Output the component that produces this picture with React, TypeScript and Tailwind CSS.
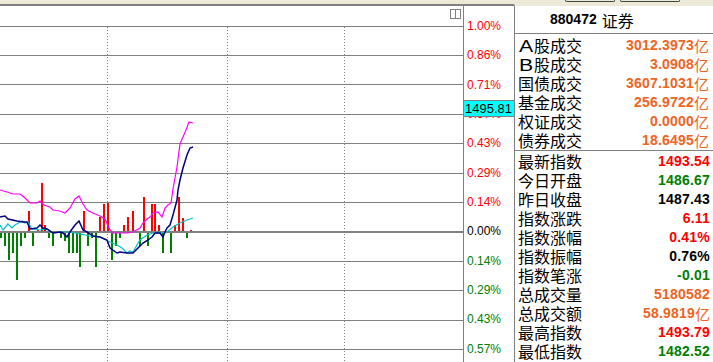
const GRID_Y = [26, 55, 84, 114, 143, 173, 202, 261, 290, 320, 349];
const V_X = [107, 227, 344];

const MAGENTA: [number, number][] = [
  [0, 190], [7, 192], [13, 194], [20, 194], [24, 197], [30, 203], [37, 203], [40, 201], [44, 205],
  [50, 207], [53, 210], [60, 211], [65, 213], [70, 208], [75, 199], [79, 196], [83, 204], [87, 210],
  [93, 213], [100, 216], [105, 219], [110, 230], [113, 233], [127, 233], [133, 232], [140, 228],
  [143, 223], [147, 219], [150, 217], [153, 213], [158, 212], [162, 217], [165, 208], [168, 205],
  [171, 203], [173, 189], [177, 167], [180, 144], [183, 137], [186, 130], [189, 122], [193, 123],
];

const NAVY: [number, number][] = [
  [0, 217], [5, 216], [8, 219], [17, 221], [23, 222], [27, 222], [30, 229], [37, 228], [40, 225],
  [43, 228], [47, 229], [53, 233], [60, 232], [63, 233], [67, 237], [70, 232], [75, 225], [79, 221],
  [83, 230], [87, 232], [93, 236], [100, 237], [107, 240], [110, 248], [117, 253], [120, 252],
  [127, 253], [133, 253], [138, 248], [143, 243], [148, 240], [152, 237], [155, 233], [160, 233],
  [163, 237], [165, 232], [167, 228], [170, 225], [173, 215], [177, 200], [178, 190], [180, 180],
  [183, 168], [187, 155], [190, 148], [193, 147],
];

const CYAN: [number, number][] = [
  [0, 225], [3, 230], [8, 224], [12, 228], [15, 225], [20, 222], [22, 221], [25, 223], [28, 222],
  [32, 229], [40, 230], [47, 229], [53, 233], [60, 232], [70, 232], [80, 234], [90, 236], [100, 237],
  [110, 242], [117, 245], [122, 248], [127, 253], [130, 251], [133, 252], [137, 245], [140, 240],
  [147, 235], [153, 233], [160, 233], [167, 232], [173, 227], [180, 223], [187, 220], [193, 218],
];

// [x, top] for up bars, [x, bottom] for down bars
const RED_BARS = [
  [28, 211], [37, 230], [41, 183], [44, 225], [83, 211], [99, 217], [103, 204], [107, 203],
  [123, 225], [127, 217], [132, 211], [143, 197], [151, 204], [154, 204], [158, 225], [174, 225],
  [178, 197], [182, 218], [190, 230],
];
const GREEN_BARS = [
  [0, 238], [4, 246], [8, 260], [12, 253], [16, 280], [20, 246], [24, 238], [32, 246], [48, 238],
  [52, 246], [60, 238], [64, 241], [68, 253], [72, 253], [76, 253], [79, 267], [87, 246], [91, 238],
  [95, 267], [111, 260], [115, 246], [119, 238], [139, 246], [147, 246], [162, 253], [170, 253],
  [186, 238],
];

const pts = (p: [number, number][]) => p.map((q) => q.join(',')).join(' ');

const COLOR = {
  r: 'text-[#ff0000]',
  g: 'text-[#008000]',
  k: 'text-black',
  o: 'text-[#f0641e]',
};
type C = keyof typeof COLOR;

const AXIS: [string, C][] = [
  ['1.00%', 'r'], ['0.86%', 'r'], ['0.71%', 'r'], ['0.57%', 'r'], ['0.43%', 'r'], ['0.29%', 'r'],
  ['0.14%', 'r'], ['0.00%', 'k'], ['0.14%', 'g'], ['0.29%', 'g'], ['0.43%', 'g'], ['0.57%', 'g'],
];

const TRADES: [string, string][] = [
  ['A股成交', '3012.3973'],
  ['B股成交', '3.0908'],
  ['国债成交', '3607.1031'],
  ['基金成交', '256.9722'],
  ['权证成交', '0.0000'],
  ['债券成交', '18.6495'],
];

const STATS: [string, string, C, boolean?][] = [
  ['最新指数', '1493.54', 'r'],
  ['今日开盘', '1486.67', 'g'],
  ['昨日收盘', '1487.43', 'k'],
  ['指数涨跌', '6.11', 'r'],
  ['指数涨幅', '0.41%', 'r'],
  ['指数振幅', '0.76%', 'k'],
  ['指数笔涨', '-0.01', 'g'],
  ['总成交量', '5180582', 'o'],
  ['总成交额', '58.9819', 'o', true],
  ['最高指数', '1493.79', 'r'],
  ['最低指数', '1482.52', 'g'],
];

function Label({ text }: { text: string }) {
  const latin = /^[AB]/.test(text);
  return (
    <span className="font-['Noto_Sans_CJK_SC',sans-serif] text-[16px] leading-[19px] text-black">
      {latin ? (
        <>
          <span className="inline-block w-[16px] text-center font-['Liberation_Sans',sans-serif] text-[17px] scale-x-125">
            {text[0]}
          </span>
          {text.slice(1)}
        </>
      ) : (
        text
      )}
    </span>
  );
}

function Value({ value, color, yi }: { value: string; color: C; yi?: boolean }) {
  return (
    <span className={`flex items-center ${COLOR[color]}`}>
      <span className="font-['Liberation_Sans',sans-serif] font-bold text-[14px] tracking-[0.2px] leading-[19px]">
        {value}
      </span>
      {yi && <span className="font-['Noto_Sans_CJK_SC',sans-serif] text-[15px] leading-[19px]">亿</span>}
    </span>
  );
}

function Chart() {
  return (
    <div className="relative w-[464px] border-r border-[#808080]">
      <svg width={463} height={356} viewBox="0 6 463 356" className="block">
        <g shapeRendering="crispEdges">
          {GRID_Y.map((y) => (
            <line key={y} x1={0} x2={463} y1={y + 0.5} y2={y + 0.5} stroke="#808080" strokeWidth={1} />
          ))}
          <rect x={0} y={231} width={463} height={2} fill="#808080" />
          {V_X.map((x) => (
            <line key={x} x1={x + 0.5} x2={x + 0.5} y1={27} y2={362} stroke="#808080" strokeWidth={1} strokeDasharray="1 2" />
          ))}
          {RED_BARS.map(([x, t]) => (
            <rect key={`r${x}`} x={x} y={t} width={2} height={231 - t} fill="#ff0000" />
          ))}
          {GREEN_BARS.map(([x, b]) => (
            <rect key={`g${x}`} x={x} y={233} width={2} height={b - 233} fill="#008000" />
          ))}
        </g>
        <polyline points={pts(MAGENTA)} fill="none" stroke="#ff00ff" strokeWidth={1.2} />
        <polyline points={pts(CYAN)} fill="none" stroke="#00c0c0" strokeWidth={1.2} />
        <polyline points={pts(NAVY)} fill="none" stroke="#000080" strokeWidth={1.5} />
      </svg>
      {/* split-window toggle */}
      <svg width={11} height={10} viewBox="0 0 11 10" className="absolute top-[3px] right-[2px]">
        <rect x={0.5} y={0.5} width={10} height={9} fill="white" stroke="#808080" />
        <line x1={5.5} x2={5.5} y1={0.5} y2={9.5} stroke="#808080" />
      </svg>
    </div>
  );
}

function Axis() {
  return (
    <div className="relative w-[50px] flex flex-col pt-[5.33px]">
      {AXIS.map(([t, c], i) => (
        <div
          key={i}
          className={`h-[29.33px] shrink-0 flex items-center pl-[3px] font-['Liberation_Sans',sans-serif] text-[12px] leading-none ${COLOR[c]}`}
        >
          {t}
        </div>
      ))}
      <div className="absolute top-[94px] left-0 w-[50px] h-[17px] bg-[#00ffff] border-y border-[#808080] flex items-center pl-[1px] font-['Liberation_Sans',sans-serif] text-[13px] leading-none text-black">
        1495.81
      </div>
    </div>
  );
}

function Panel() {
  return (
    <div className="flex-1 flex flex-col border-l border-[#808080] border-t-2 border-t-[#ece9d8]">
      <div className="h-[28px] shrink-0 flex items-center pl-[35px] border-b border-[#808080]">
        <span className="font-['Liberation_Sans',sans-serif] font-bold text-[14px] text-black">880472</span>
        <span className="ml-[5px] font-['Noto_Sans_CJK_SC',sans-serif] text-[16px] text-black">证券</span>
      </div>
      <div className="pt-[2px] border-b border-[#808080]">
        {TRADES.map(([l, v]) => (
          <div key={l} className="h-[19px] flex items-center justify-between pl-[3px] pr-[4px]">
            <Label text={l} />
            <Value value={v} color="o" yi />
          </div>
        ))}
      </div>
      <div className="pt-[1px]">
        {STATS.map(([l, v, c, yi]) => (
          <div key={l} className="h-[19px] flex items-center justify-between pl-[3px] pr-[3px]">
            <Label text={l} />
            <Value value={v} color={c} yi={yi} />
          </div>
        ))}
      </div>
    </div>
  );
}

export default function App() {
  return (
    <div className="w-[713px] h-[362px] bg-white overflow-hidden flex flex-col">
      <div className="h-[4px] shrink-0 bg-[#ece9d8] flex">
        <div className="w-[565px]" />
        <div className="w-[50px] h-[2px] border-x border-b border-[#3c4a3c] rounded-b-[2px]" />
        <div className="w-[5px]" />
        <div className="w-[60px] h-[2px] border-x border-b border-[#3c4a3c] rounded-b-[2px]" />
      </div>
      <div className="flex flex-1 min-h-0">
        <div className="flex w-[514px] border-t-2 border-[#808080]">
          <Chart />
          <Axis />
        </div>
        <Panel />
      </div>
    </div>
  );
}
